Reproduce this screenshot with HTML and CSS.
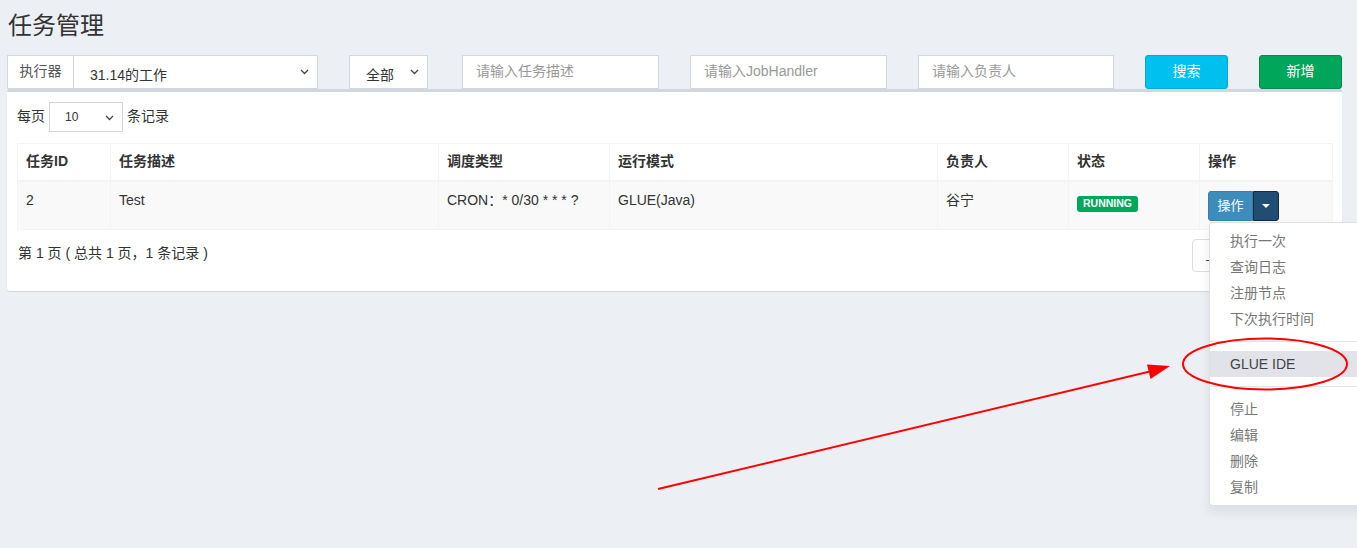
FILE: index.html
```html
<!DOCTYPE html>
<html lang="zh">
<head>
<meta charset="utf-8">
<title>任务管理</title>
<link rel="stylesheet" href="styles.css">
</head>
<body>
<div class="page">
  <h1 class="title">任务管理</h1>
  <div class="toolbar">
    <div class="input-group">
      <span class="addon">执行器</span>
      <div class="select sel-exec"><span>31.14的工作</span><svg class="chev" width="9" height="6" viewBox="0 0 9 6"><path d="M1 1l3.5 3.5L8 1" fill="none" stroke="#444" stroke-width="1.3"/></svg></div>
    </div>
    <div class="select sel-status"><span>全部</span><svg class="chev" width="9" height="6" viewBox="0 0 9 6"><path d="M1 1l3.5 3.5L8 1" fill="none" stroke="#444" stroke-width="1.3"/></svg></div>
    <div class="input">请输入任务描述</div>
    <div class="input">请输入JobHandler</div>
    <div class="input input-last">请输入负责人</div>
    <div class="btn btn-info">搜索</div>
    <div class="btn btn-success">新增</div>
  </div>

  <div class="box">
    <div class="length">
      <span class="len-label">每页</span>
      <div class="select sel-len"><span>10</span><svg class="chev" width="9" height="6" viewBox="0 0 9 6"><path d="M1 1l3.5 3.5L8 1" fill="none" stroke="#444" stroke-width="1.3"/></svg></div>
      <span class="len-label">条记录</span>
    </div>
    <table class="table">
      <colgroup>
        <col class="c1"><col class="c2"><col class="c3"><col class="c4"><col class="c5"><col class="c6"><col class="c7">
      </colgroup>
      <thead>
        <tr><th>任务ID</th><th>任务描述</th><th>调度类型</th><th>运行模式</th><th>负责人</th><th>状态</th><th>操作</th></tr>
      </thead>
      <tbody>
        <tr>
          <td>2</td><td>Test</td><td>CRON：* 0/30 * * * ?</td><td>GLUE(Java)</td><td>谷宁</td>
          <td><span class="label">RUNNING</span></td>
          <td>
            <div class="btn-group">
              <span class="bsm bsm-main">操作</span><span class="bsm bsm-toggle"><svg width="8" height="4" viewBox="0 0 8 4"><path d="M0 0h8L4 4z" fill="#fff"/></svg></span>
              <ul class="dropdown">
                <li>执行一次</li>
                <li>查询日志</li>
                <li>注册节点</li>
                <li>下次执行时间</li>
                <li class="divider"></li>
                <li class="hover">GLUE IDE</li>
                <li class="divider"></li>
                <li>停止</li>
                <li>编辑</li>
                <li>删除</li>
                <li>复制</li>
              </ul>
            </div>
          </td>
        </tr>
      </tbody>
    </table>
    <div class="info-row">
      <span class="info">第 1 页 ( 总共 1 页，1 条记录 )</span>
      <ul class="pagination">
        <li>上页</li><li>1</li><li>下页</li>
      </ul>
    </div>
  </div>
</div>
<svg class="annot" width="1357" height="548" viewBox="0 0 1357 548">
  <ellipse cx="1265" cy="364" rx="82" ry="25.5" fill="none" stroke="#ff0000" stroke-width="2"/>
  <line x1="658" y1="489" x2="1152" y2="371" stroke="#ff0000" stroke-width="2"/>
  <polygon points="1170,366 1147,364.5 1150.5,379" fill="#ff0000"/>
</svg>
</body>
</html>
```

FILE: styles.css
```css
html, body {
  margin: 0;
  padding: 0;
  overflow: hidden;
  width: 1357px;
  height: 548px;
}
body {
  background: #ecf0f5;
  font-family: "Liberation Sans", "Noto Sans CJK SC", sans-serif;
  font-size: 14px;
  color: #333;
  position: relative;
}
.page {
  padding: 0 7px;
}
.title {
  margin: 11px 0 14px 1px;
  font-size: 24px;
  line-height: 30px;
  font-weight: 400;
  color: #333;
}
.toolbar {
  display: flex;
  gap: 31px;
  height: 34px;
}
.input-group {
  display: flex;
  width: 311px;
}
.addon {
  box-sizing: border-box;
  width: 67px;
  height: 34px;
  border: 1px solid #d2d6de;
  background: #fff;
  display: flex;
  align-items: center;
  justify-content: center;
  padding-bottom: 4px;
  color: #555;
}
.select {
  box-sizing: border-box;
  height: 34px;
  border: 1px solid #d2d6de;
  background: #fff;
  display: flex;
  align-items: center;
  justify-content: space-between;
  padding: 4px 8px 0 16px;
  color: #333;
}
.sel-exec {
  flex: 1;
  border-left: none;
}
.sel-status {
  width: 79px;
  margin-right: 3px;
}
.chev {
  display: block;
  margin-top: -4px;
}
.input {
  box-sizing: border-box;
  width: 197px;
  height: 34px;
  border: 1px solid #d2d6de;
  background: #fff;
  padding: 0 13px 4px;
  display: flex;
  align-items: center;
  color: #999;
}
.input-last {
  width: 196px;
}
.btn {
  box-sizing: border-box;
  width: 83px;
  height: 34px;
  border: 1px solid transparent;
  border-radius: 3px;
  display: flex;
  align-items: center;
  justify-content: center;
  padding-bottom: 4px;
  color: #fff;
}
.btn-info {
  background: #00c0ef;
  border-color: #00acd6;
}
.btn-success {
  background: #00a65a;
  border-color: #008d4c;
}
.box {
  box-sizing: border-box;
  width: 1335px;
  background: #fff;
  border-top: 3px solid #d2d6de;
  border-radius: 3px;
  box-shadow: 0 1px 1px rgba(0, 0, 0, 0.1);
  padding: 10px 10px 19px;
}
.length {
  display: flex;
  align-items: center;
  gap: 4px;
  height: 30px;
}
.len-label {
  padding-bottom: 4px;
}
.sel-len {
  width: 74px;
  height: 30px;
  padding: 0 8px 0 15px;
  font-size: 12px;
}
.sel-len .chev {
  margin-top: 2px;
}
.table {
  width: 1315px;
  margin-top: 11px;
  border-collapse: collapse;
  table-layout: fixed;
  border: 1px solid #f4f4f4;
}
.c1 { width: 93px; }
.c2 { width: 328px; }
.c3 { width: 171px; }
.c4 { width: 328px; }
.c5 { width: 131px; }
.c6 { width: 131px; }
.c7 { width: 133px; }
.table th, .table td {
  border: 1px solid #f4f4f4;
  padding: 8px;
  line-height: 20px;
  text-align: left;
  vertical-align: top;
}
.table th {
  font-weight: 700;
  padding: 7px 8px 9px;
  border-bottom: 2px solid #f4f4f4;
}
.table tbody tr {
  background: #f9f9f9;
}
.label {
  display: inline-block;
  background: #00a65a;
  color: #fff;
  font-size: 10.5px;
  font-weight: 700;
  line-height: 1;
  padding: 2px 6px 3px;
  border-radius: 3px;
  vertical-align: -2px;
}
.btn-group {
  position: relative;
  display: inline-flex;
  margin-top: 1px;
}
.bsm {
  box-sizing: border-box;
  height: 30px;
  display: flex;
  align-items: center;
  justify-content: center;
  font-size: 13px;
  color: #fff;
  border: 1px solid #367fa9;
}
.bsm-main {
  width: 45px;
  background: #3c8dbc;
  border-radius: 3px 0 0 3px;
}
.bsm-toggle {
  width: 26px;
  background: #204d74;
  border-color: #122b40;
  border-radius: 0 3px 3px 0;
}
.dropdown {
  position: absolute;
  top: 31px;
  left: 1px;
  width: 170px;
  margin: 0;
  padding: 5px 0;
  list-style: none;
  background: #fff;
  border: 1px solid rgba(0, 0, 0, 0.12);
  border-radius: 4px;
  box-shadow: 0 6px 12px rgba(0, 0, 0, 0.08);
  z-index: 5;
}
.dropdown li {
  padding: 3px 20px;
  line-height: 20px;
  color: #777;
  font-size: 14px;
  white-space: nowrap;
}
.dropdown li.divider {
  padding: 0;
  height: 1px;
  margin: 9px 0;
  background: #e5e5e5;
}
.dropdown li.hover {
  background: #e1e3e9;
  color: #444;
}
.info-row {
  display: flex;
  justify-content: space-between;
  align-items: center;
  margin-top: 9px;
  height: 33px;
}
.info {
  padding-left: 1px;
  padding-bottom: 7px;
}
.pagination {
  display: flex;
  margin: 0;
  padding: 0;
  list-style: none;
}
.pagination li {
  padding: 6px 12px;
  line-height: 19px;
  border: 1px solid #ddd;
  margin-left: -1px;
  color: #444;
}
.pagination li:first-child {
  border-radius: 4px 0 0 4px;
}
.pagination li:last-child {
  border-radius: 0 4px 4px 0;
}
.annot {
  position: absolute;
  top: 0;
  left: 0;
  pointer-events: none;
  z-index: 10;
}
```
